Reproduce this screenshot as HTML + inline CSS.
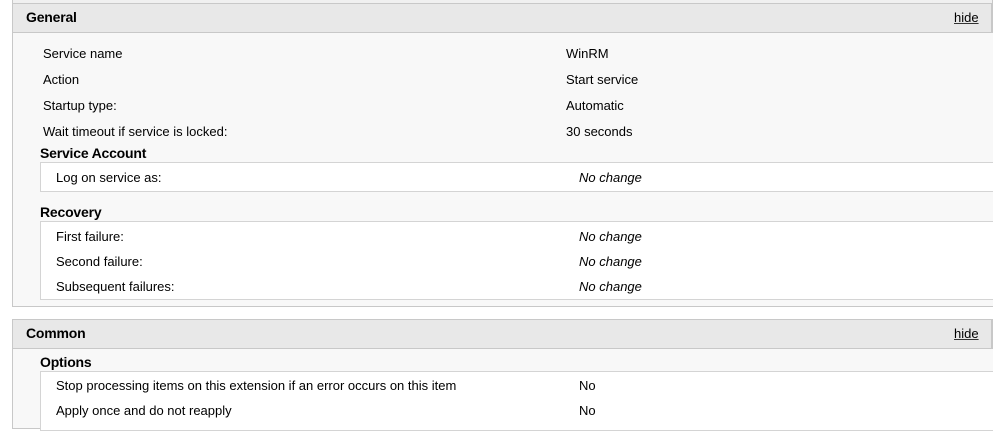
<!DOCTYPE html>
<html><head><style>
body{margin:0;width:993px;height:426px;overflow:hidden;background:#fff;font-family:"Liberation Sans",sans-serif;font-size:13px;color:#000;position:relative}
div{position:absolute;box-sizing:border-box}
.t{white-space:nowrap;line-height:15px}
.hdr{background:#e8e8e8;border:1px solid #c8c8c8;border-right:2px solid #c8c8c8}
.body{background:#f8f8f8;border:1px solid #c8c8c8;border-top:none;border-right:none}
.box{background:#fff;border:1px solid #d4d4d4;border-right:none}
.b{font-weight:bold;font-size:14px;letter-spacing:-0.2px}
.i{font-style:italic}
.hide{color:#000;text-decoration:underline;text-decoration-color:#333}
</style></head><body>
<div style="left:12px;top:0;width:981px;height:4px;border:1px solid #c8c8c8;border-top:none;background:#f0f0f0"></div>
<div class="hdr" style="left:12px;top:3px;width:981px;height:30px"></div>
<div class="t b" style="left:26px;top:10px">General</div>
<div class="t hide" style="left:954px;top:10px">hide</div>
<div class="body" style="left:12px;top:33px;width:981px;height:274px"></div>
<div class="t" style="left:43px;top:46px">Service name</div><div class="t" style="left:566px;top:46px">WinRM</div>
<div class="t" style="left:43px;top:72px">Action</div><div class="t" style="left:566px;top:72px">Start service</div>
<div class="t" style="left:43px;top:98px">Startup type:</div><div class="t" style="left:566px;top:98px">Automatic</div>
<div class="t" style="left:43px;top:124px">Wait timeout if service is locked:</div><div class="t" style="left:566px;top:124px">30 seconds</div>
<div class="t b" style="left:40px;top:146px">Service Account</div>
<div class="box" style="left:40px;top:162px;width:953px;height:30px"></div>
<div class="t" style="left:56px;top:170px">Log on service as:</div><div class="t i" style="left:579px;top:170px">No change</div>
<div class="t b" style="left:40px;top:205px">Recovery</div>
<div class="box" style="left:40px;top:221px;width:953px;height:79px"></div>
<div class="t" style="left:56px;top:229px">First failure:</div><div class="t i" style="left:579px;top:229px">No change</div>
<div class="t" style="left:56px;top:254px">Second failure:</div><div class="t i" style="left:579px;top:254px">No change</div>
<div class="t" style="left:56px;top:279px">Subsequent failures:</div><div class="t i" style="left:579px;top:279px">No change</div>
<div class="hdr" style="left:12px;top:319px;width:981px;height:30px"></div>
<div class="t b" style="left:26px;top:326px">Common</div>
<div class="t hide" style="left:954px;top:326px">hide</div>
<div class="body" style="left:12px;top:349px;width:981px;height:80px"></div>
<div class="t b" style="left:40px;top:355px">Options</div>
<div class="box" style="left:40px;top:371px;width:953px;height:60px"></div>
<div class="t" style="left:56px;top:378px">Stop processing items on this extension if an error occurs on this item</div><div class="t" style="left:579px;top:378px">No</div>
<div class="t" style="left:56px;top:403px">Apply once and do not reapply</div><div class="t" style="left:579px;top:403px">No</div>
</body></html>
